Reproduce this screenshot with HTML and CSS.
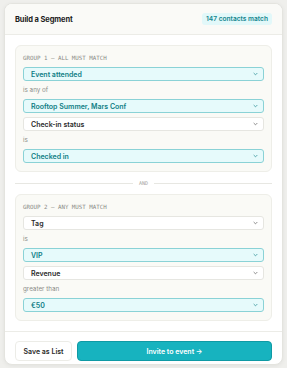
FILE: index.html
```html
<!DOCTYPE html>
<html lang="en">
<head>
    <meta charset="UTF-8">
    <meta name="viewport" content="width=device-width, initial-scale=1.0">
    <title>Build a Segment</title>
    <link rel="stylesheet" href="styles.css">
</head>
<body>
    <div class="card">
        <div class="card-header">
            <h1>Build a Segment</h1>
            <span class="badge">147 contacts match</span>
        </div>

        <div class="card-body">
            <div class="group">
                <div class="group-label">GROUP 1 — ALL MUST MATCH</div>
                <div class="select active"><span>Event attended</span><svg class="chev" viewBox="0 0 6 4"><path d="M0.8 0.8 L3 3 L5.2 0.8"/></svg></div>
                <div class="op">is any of</div>
                <div class="select active"><span>Rooftop Summer, Mars Conf</span><svg class="chev" viewBox="0 0 6 4"><path d="M0.8 0.8 L3 3 L5.2 0.8"/></svg></div>
                <div class="select"><span>Check-in status</span><svg class="chev" viewBox="0 0 6 4"><path d="M0.8 0.8 L3 3 L5.2 0.8"/></svg></div>
                <div class="op">is</div>
                <div class="select active"><span>Checked in</span><svg class="chev" viewBox="0 0 6 4"><path d="M0.8 0.8 L3 3 L5.2 0.8"/></svg></div>
            </div>

            <div class="divider"><span>AND</span></div>

            <div class="group">
                <div class="group-label">GROUP 2 — ANY MUST MATCH</div>
                <div class="select"><span>Tag</span><svg class="chev" viewBox="0 0 6 4"><path d="M0.8 0.8 L3 3 L5.2 0.8"/></svg></div>
                <div class="op">is</div>
                <div class="select active"><span>VIP</span><svg class="chev" viewBox="0 0 6 4"><path d="M0.8 0.8 L3 3 L5.2 0.8"/></svg></div>
                <div class="select"><span>Revenue</span><svg class="chev" viewBox="0 0 6 4"><path d="M0.8 0.8 L3 3 L5.2 0.8"/></svg></div>
                <div class="op">greater than</div>
                <div class="select active"><span>€50</span><svg class="chev" viewBox="0 0 6 4"><path d="M0.8 0.8 L3 3 L5.2 0.8"/></svg></div>
            </div>
        </div>

        <div class="card-footer">
            <button class="btn btn-secondary">Save as List</button>
            <button class="btn btn-primary">Invite to event →</button>
        </div>
    </div>
</body>
</html>
```

FILE: styles.css
```css
* {
    box-sizing: border-box;
}

body {
    font-family: 'Inter', 'Noto Sans', sans-serif;
    background-color: #efefec;
    color: #222;
    margin: 0;
    padding: 3px 4px;
    height: 368px;
}

.card {
    display: flex;
    flex-direction: column;
    height: 362px;
    background-color: #fff;
    border: 1px solid #e4e4df;
    border-radius: 8px;
    box-shadow: 0 1px 4px rgba(0, 0, 0, 0.06);
    overflow: hidden;
}

.card-header {
    display: flex;
    flex: none;
    justify-content: space-between;
    align-items: center;
    height: 31px;
    padding: 0 10px;
    background-color: #fafaf7;
    border-bottom: 1px solid #ecece7;
}

h1 {
    font-size: 7.5px;
    font-weight: 700;
    margin: 0;
    color: #1c1c1c;
    letter-spacing: -0.1px;
}

.badge {
    font-size: 6.6px;
    font-weight: 600;
    color: #12868e;
    background-color: #e2f8f9;
    padding: 2px 4px;
    line-height: 8px;
    border-radius: 3px;
}

.card-body {
    display: flex;
    flex: 1;
    flex-direction: column;
    gap: 6px;
    padding: 10px;
}

.group {
    display: flex;
    flex: none;
    flex-direction: column;
    gap: 4px;
    padding: 8px 7px;
    background-color: #fafaf6;
    border: 1px solid #eeeee8;
    border-radius: 6px;
}

.group-label {
    flex: none;
    font-family: 'DejaVu Sans Mono', monospace;
    font-size: 5.8px;
    line-height: 9px;
    color: #8a8a86;
}

.op {
    flex: none;
    font-size: 6.3px;
    line-height: 10px;
    color: #8c8c88;
}

.select {
    display: flex;
    flex: none;
    justify-content: space-between;
    align-items: center;
    height: 14px;
    padding: 0 5px 0 7px;
    font-size: 7px;
    font-weight: 600;
    color: #2b2b2b;
    background-color: #fff;
    border: 1px solid #e6e6e1;
    border-radius: 3px;
}

.select.active {
    color: #0f7e86;
    background-color: #e6fafb;
    border-color: #8ad2d6;
}

.chev {
    width: 5px;
    height: 4px;
    fill: none;
    stroke: #666;
    stroke-width: 0.9;
}

.select.active .chev {
    stroke: #2b8e95;
}

.divider {
    display: flex;
    flex: none;
    align-items: center;
    gap: 6px;
    height: 10px;
    font-family: 'DejaVu Sans Mono', monospace;
    font-size: 5px;
    color: #a5a5a0;
}

.divider::before,
.divider::after {
    content: "";
    flex: 1;
    height: 1px;
    background-color: #e7e7e2;
}

.card-footer {
    display: flex;
    flex: none;
    gap: 5px;
    height: 39px;
    padding: 9px 10px;
    border-top: 1px solid #ecece7;
}

.btn {
    height: 20px;
    font-family: 'Inter', 'Noto Sans', sans-serif;
    font-size: 7px;
    font-weight: 600;
    border-radius: 4px;
    cursor: pointer;
}

.btn-secondary {
    width: 57px;
    background-color: #fff;
    color: #2b2b2b;
    border: 1px solid #ececE7;
}

.btn-primary {
    flex: 1;
    background-color: #17b3bf;
    color: #fff;
    border: 1px solid #0f9aa4;
}
```
